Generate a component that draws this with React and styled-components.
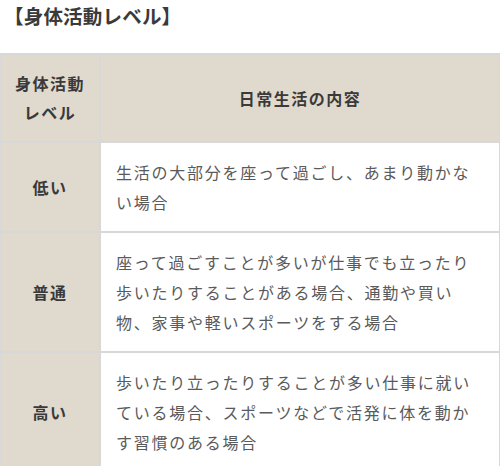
import React from 'react'
import styled, { createGlobalStyle } from 'styled-components'

const Global = createGlobalStyle`
  html, body {
    margin: 0;
    padding: 0;
    background: #fff;
    overflow: hidden;
  }
  body {
    font-family: "Noto Sans CJK JP", "Noto Sans", sans-serif;
  }
`

const Page = styled.div`
  width: 500px;
  height: 466px;
  overflow: hidden;
`

const Title = styled.h3`
  margin: 0;
  padding: 3px 0 0 4px;
  height: 53px;
  box-sizing: border-box;
  font-size: 19.5px;
  line-height: 26px;
  font-weight: 700;
  color: #3a3a3a;
  letter-spacing: 0.2px;
`

const Table = styled.table`
  width: 502px;
  margin-left: -1px;
  border-collapse: collapse;
  table-layout: fixed;

  th,
  td {
    border: 2px solid #d8d8d8;
    padding: 14px 0;
    line-height: 30px;
    vertical-align: middle;
  }
`

const HeadCell = styled.th`
  background: #e0d9ce;
  color: #3a3a3a;
  font-size: 16px;
  font-weight: 700;
  text-align: center;
  letter-spacing: 1.5px;
  width: ${props => props.width || 'auto'};
  && {
    line-height: 29px;
  }
`

const LevelCell = styled.td`
  background: #e0d9ce;
  color: #3a3a3a;
  font-size: 16px;
  font-weight: 700;
  text-align: center;
  letter-spacing: 1.5px;
`

const TextCell = styled.td`
  background: #fff;
  color: #5a5a5a;
  font-size: 16px;
  letter-spacing: 1.75px;
  && {
    padding-left: 15px;
    padding-right: 24px;
  }
`

const rows = [
  { level: '低い', text: '生活の大部分を座って過ごし、あまり動かない場合' },
  {
    level: '普通',
    text: '座って過ごすことが多いが仕事でも立ったり歩いたりすることがある場合、通勤や買い物、家事や軽いスポーツをする場合',
  },
  {
    level: '高い',
    text: '歩いたり立ったりすることが多い仕事に就いている場合、スポーツなどで活発に体を動かす習慣のある場合',
  },
]

const App = () => {
  return (
    <Page>
      <Global />
      <Title>【身体活動レベル】</Title>
      <Table>
        <thead>
          <tr>
            <HeadCell width="98px">
              身体活動
              <br />
              レベル
            </HeadCell>
            <HeadCell>日常生活の内容</HeadCell>
          </tr>
        </thead>
        <tbody>
          {rows.map(row => (
            <tr key={row.level}>
              <LevelCell>{row.level}</LevelCell>
              <TextCell>{row.text}</TextCell>
            </tr>
          ))}
        </tbody>
      </Table>
    </Page>
  )
}

export default App
